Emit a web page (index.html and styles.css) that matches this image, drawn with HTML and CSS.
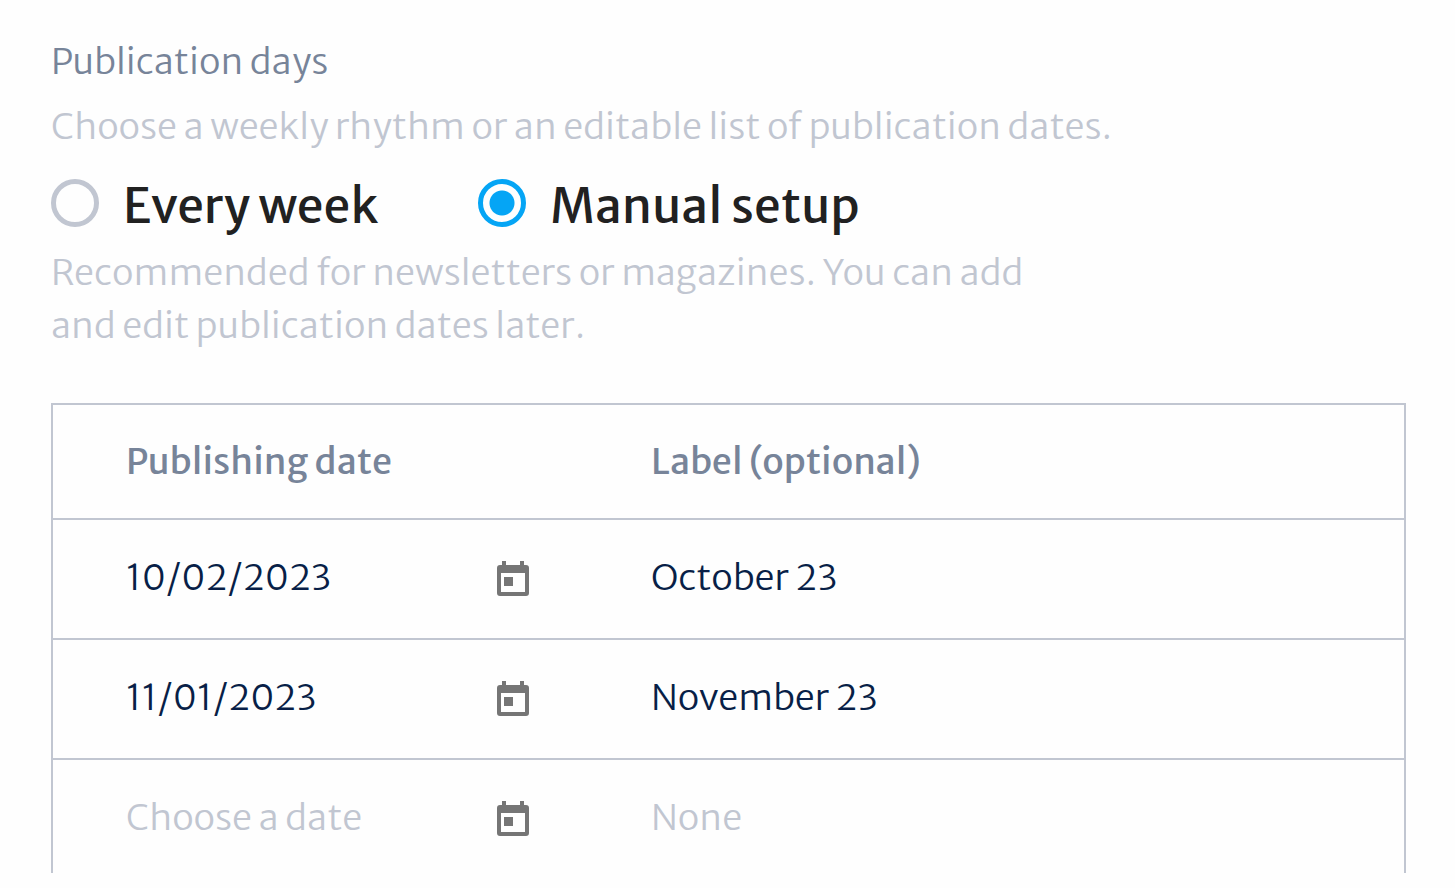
FILE: index.html
```
<!DOCTYPE html>
<html lang="en">
<head>
    <meta charset="UTF-8">
    <meta name="viewport" content="width=device-width, initial-scale=1.0">
    <title>Publication days</title>
    <link rel="stylesheet" href="styles.css">
</head>
<body>
    <svg class="sprite" aria-hidden="true">
        <symbol id="calendar" viewBox="0 0 32 36">
            <path fill-rule="evenodd" d="M5 0h4v4h14V0h4v4h2a3 3 0 0 1 3 3v25a3 3 0 0 1-3 3H3a3 3 0 0 1-3-3V7a3 3 0 0 1 3-3h2zM4 12v19h24V12zM7 16h9v9H7z"/>
        </symbol>
    </svg>

    <main>
        <fieldset class="days">
            <legend>Publication days</legend>
            <p class="hint">Choose a weekly rhythm or an editable list of publication dates.</p>
            <div class="options">
                <label class="option" for="weekly">
                    <input type="radio" name="setup" id="weekly">
                    <span>Every week</span>
                </label>
                <label class="option" for="manual">
                    <input type="radio" name="setup" id="manual" checked>
                    <span>Manual setup</span>
                </label>
            </div>
            <p class="hint note">Recommended for newsletters or magazines. You can add and edit publication dates later.</p>
        </fieldset>

        <table class="dates">
            <thead>
                <tr>
                    <th class="date-col" id="dateHead">Publishing date</th>
                    <th id="labelHead">Label (optional)</th>
                </tr>
            </thead>
            <tbody>
                <tr>
                    <td>
                        <div class="date-field">
                            <input type="text" value="10/02/2023" placeholder="Choose a date" aria-labelledby="dateHead">
                            <button type="button" aria-label="Open calendar"><svg><use href="#calendar"/></svg></button>
                        </div>
                    </td>
                    <td><input type="text" value="October 23" placeholder="None" aria-labelledby="labelHead"></td>
                </tr>
                <tr>
                    <td>
                        <div class="date-field">
                            <input type="text" value="11/01/2023" placeholder="Choose a date" aria-labelledby="dateHead">
                            <button type="button" aria-label="Open calendar"><svg><use href="#calendar"/></svg></button>
                        </div>
                    </td>
                    <td><input type="text" value="November 23" placeholder="None" aria-labelledby="labelHead"></td>
                </tr>
                <tr>
                    <td>
                        <div class="date-field">
                            <input type="text" placeholder="Choose a date" aria-labelledby="dateHead">
                            <button type="button" aria-label="Open calendar"><svg><use href="#calendar"/></svg></button>
                        </div>
                    </td>
                    <td><input type="text" placeholder="None" aria-labelledby="labelHead"></td>
                </tr>
            </tbody>
        </table>
    </main>
</body>
</html>
```
FILE: styles.css
```
* {
    box-sizing: border-box;
}

body {
    font-family: "Merriweather Sans", "Open Sans", sans-serif;
    font-size: 36px;
    font-weight: 300;
    line-height: 53px;
    background: #fefefe;
    color: #081f47;
    margin: 0;
}

.sprite {
    display: none;
}

main {
    padding: 35px 49px 15px 51px;
}

.days {
    border: 0;
    margin: 0;
    padding: 0;
}

legend {
    color: #778499;
    padding: 0;
}

.hint {
    color: #c1c6d1;
    margin: 12px 0 0;
}

.options {
    display: flex;
    flex-wrap: wrap;
    gap: 100px;
    margin-top: 17px;
}

.option {
    display: flex;
    align-items: center;
    gap: 24px;
    color: #212121;
    font-size: 48px;
    font-weight: 400;
    line-height: 60px;
    cursor: pointer;
}

.option span {
    padding-top: 6px;
}

.option input {
    appearance: none;
    width: 48px;
    height: 48px;
    margin: 0;
    border: 5px solid #c1c6d1;
    border-radius: 50%;
    cursor: pointer;
}

.option input:checked {
    border-color: #05a5f5;
    background: radial-gradient(circle, #05a5f5 12px, transparent 13px);
}

.note {
    max-width: 1000px;
    margin-top: 10px;
}

.dates {
    width: 100%;
    margin-top: 51px;
    table-layout: fixed;
    border-spacing: 0;
    border: 2px solid #c1c6d1;
    border-bottom: 0;
}

.dates th,
.dates td {
    height: 120px;
    padding: 0 0 0 73px;
    border-bottom: 2px solid #c1c6d1;
    text-align: left;
}

.dates th {
    height: 115px;
    color: #778499;
    font-weight: 500;
}

.dates tbody tr:last-child td {
    height: 113px;
    padding-top: 5px;
    border-bottom: 0;
}

.date-col {
    width: 525px;
}

.dates input {
    width: 100%;
    min-width: 0;
    padding: 0 0 4px;
    border: 0;
    background: none;
    color: inherit;
    font: inherit;
}

.dates input::placeholder {
    color: #c1c6d1;
    opacity: 1;
}

.date-field {
    display: flex;
    align-items: center;
    padding-right: 49px;
}

.date-field button {
    display: flex;
    padding: 0;
    border: 0;
    background: none;
    cursor: pointer;
}

.date-field svg {
    width: 32px;
    height: 36px;
    fill: #757575;
}
```
